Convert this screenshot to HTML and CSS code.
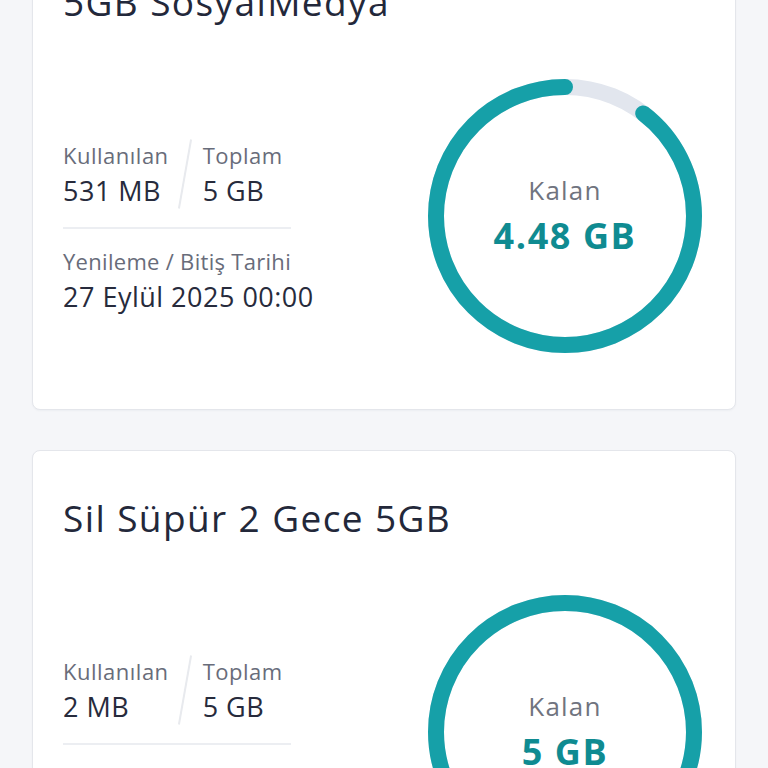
FILE: index.html
```html
<!DOCTYPE html>
<html lang="tr">
<head>
<meta charset="utf-8">
<title>Paketler</title>
<link rel="stylesheet" href="styles.css">
</head>
<body>
<main class="list">
  <section class="card">
    <h2 class="card-title">5GB SosyalMedya</h2>
    <div class="card-body">
      <div class="info">
        <div class="stats">
          <div class="stat">
            <div class="label">Kullanılan</div>
            <div class="value">531 MB</div>
          </div>
          <div class="slash"></div>
          <div class="stat">
            <div class="label">Toplam</div>
            <div class="value">5 GB</div>
          </div>
        </div>
        <div class="divider"></div>
        <div class="label label-date">Yenileme / Bitiş Tarihi</div>
        <div class="value">27 Eylül 2025 00:00</div>
      </div>
      <div class="gauge">
        <svg class="ring" viewBox="0 0 274 274" width="274" height="274">
          <circle class="track" cx="137" cy="137" r="129"/>
          <circle class="arc" cx="137" cy="137" r="129" pathLength="100" stroke-dasharray="89.63 100" stroke-dashoffset="-10.37" transform="rotate(-90 137 137)"/>
        </svg>
        <div class="gauge-text">
          <div class="gauge-label">Kalan</div>
          <div class="gauge-value">4.48 GB</div>
        </div>
      </div>
    </div>
  </section>

  <section class="card">
    <h2 class="card-title">Sil Süpür 2 Gece 5GB</h2>
    <div class="card-body">
      <div class="info">
        <div class="stats">
          <div class="stat">
            <div class="label">Kullanılan</div>
            <div class="value">2 MB</div>
          </div>
          <div class="slash"></div>
          <div class="stat">
            <div class="label">Toplam</div>
            <div class="value">5 GB</div>
          </div>
        </div>
        <div class="divider"></div>
        <div class="label label-date">Yenileme / Bitiş Tarihi</div>
        <div class="value">28 Eylül 2025 00:00</div>
      </div>
      <div class="gauge">
        <svg class="ring" viewBox="0 0 274 274" width="274" height="274">
          <circle class="track" cx="137" cy="137" r="129"/>
          <circle class="arc full" cx="137" cy="137" r="129"/>
        </svg>
        <div class="gauge-text">
          <div class="gauge-label">Kalan</div>
          <div class="gauge-value">5 GB</div>
        </div>
      </div>
    </div>
  </section>
</main>
</body>
</html>
```

FILE: styles.css
```css
html, body {
  margin: 0;
  padding: 0;
}

body {
  background: #f5f6f9;
  font-family: "Open Sans", "Noto Sans", "Liberation Sans", sans-serif;
  color: #272b3c;
}

.list {
  display: flex;
  flex-direction: column;
  gap: 40px;
  padding: 0 32px;
  margin-top: -66px;
}

.card {
  background: #ffffff;
  border: 1px solid #e4e6eb;
  border-radius: 8px;
  padding: 45px 33px 56px 30px;
  box-shadow: 0 1px 2px rgba(30, 40, 70, 0.04);
}

.card-title {
  margin: 0 0 55px;
  font-size: 37px;
  line-height: 44px;
  font-weight: 400;
  letter-spacing: 1.4px;
  color: #23283a;
}

.card-body {
  display: flex;
  justify-content: space-between;
  align-items: flex-start;
  height: 274px;
}

.info {
  margin-top: 60px;
  display: flex;
  flex-direction: column;
}

.stats {
  display: flex;
  align-items: center;
}

.stat {
  display: flex;
  flex-direction: column;
}

.label {
  font-size: 22px;
  line-height: 28px;
  color: #686c7a;
  margin-bottom: 6px;
  letter-spacing: 0.5px;
}

.label-date {
  letter-spacing: 0.3px;
}

.value {
  font-size: 27px;
  line-height: 32px;
  color: #272b3c;
  letter-spacing: 0.5px;
}

.slash {
  width: 2px;
  height: 70px;
  background: #e8eaee;
  margin: 0 17px 0 15px;
  transform: rotate(10deg);
}

.divider {
  width: 228px;
  height: 2px;
  background: #eceef2;
  margin: 18px 0 18px;
}

.gauge {
  position: relative;
  width: 274px;
  height: 274px;
}

.ring {
  display: block;
}

.track {
  fill: none;
  stroke: #e2e6ee;
  stroke-width: 16;
}

.arc {
  fill: none;
  stroke: #16a0a8;
  stroke-width: 16;
  stroke-linecap: round;
}

.gauge-text {
  position: absolute;
  inset: 0;
  display: flex;
  flex-direction: column;
  align-items: center;
  justify-content: center;
}

.gauge-label {
  font-size: 26px;
  line-height: 32px;
  color: #70747f;
  margin-bottom: 8px;
  letter-spacing: 1.2px;
}

.gauge-value {
  font-size: 36px;
  line-height: 44px;
  font-weight: 700;
  color: #0f8b91;
  letter-spacing: 1.6px;
}
```
